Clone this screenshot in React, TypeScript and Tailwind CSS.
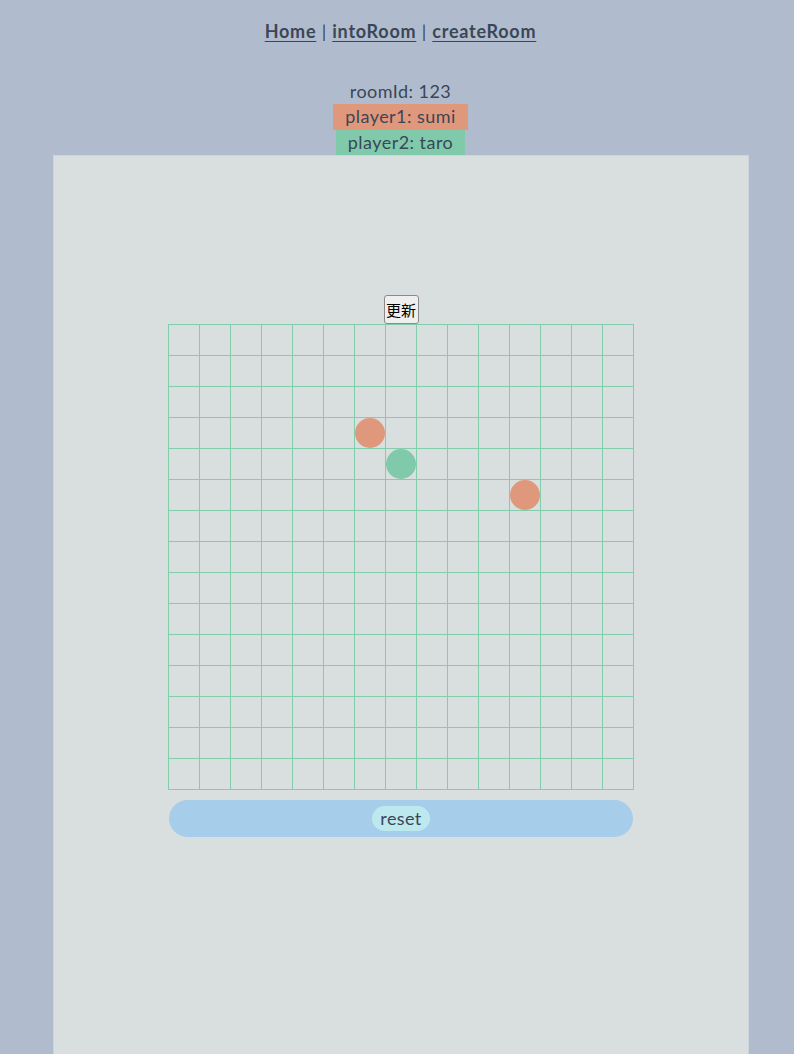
import React from "react";

const stones: Record<string, "o" | "g"> = {
  "3-6": "o",
  "4-7": "g",
  "5-11": "o",
};

export default function App() {
  const cells = [];
  for (let r = 0; r < 15; r++) {
    for (let c = 0; c < 15; c++) {
      const s = stones[`${r}-${c}`];
      cells.push(
        <div
          key={`${r}-${c}`}
          className="w-[31px] h-[31px] border-r border-b border-[#82cdab]"
        >
          {s === "o" && <div className="w-[30px] h-[30px] rounded-full bg-[#e0987c]" />}
          {s === "g" && <div className="w-[30px] h-[30px] rounded-full bg-[#80caab]" />}
        </div>
      );
    }
  }

  return (
    <div
      className="min-h-[1054px] bg-[#b0bccd] text-[#3b4657] overflow-hidden"
      style={{ fontFamily: "Lato, 'Noto Sans', sans-serif" }}
    >
      <nav className="pl-[7px] pt-[18px] text-center text-[18px] leading-[26px] font-bold tracking-[0.75px]">
        <a className="underline underline-offset-[3px]">Home</a>
        <span className="font-normal"> | </span>
        <a className="underline underline-offset-[3px]">intoRoom</a>
        <span className="font-normal"> | </span>
        <a className="underline underline-offset-[3px]">createRoom</a>
      </nav>
      <div className="pl-[7px] mt-[34.5px] flex flex-col items-center text-[18px] leading-[25.5px] tracking-[0.45px]">
        <div>roomId: 123</div>
        <div className="bg-[#e0987c] px-3">player1: sumi</div>
        <div className="bg-[#80caab] px-3">player2: taro</div>
      </div>
      <div className="ml-[53px] w-[696px] h-[920px] bg-[#d9dfdf] border border-[#cdd4dc] flex flex-col items-center">
        <button
          className="mt-[139px] w-[35px] h-[29px] border border-[#8a8a8a] rounded-[3px] bg-[#efefef] text-black text-[15px] leading-[27px] p-0"
          style={{ fontFamily: "'Noto Sans CJK JP', sans-serif" }}
        >
          更新
        </button>
        <div className="grid grid-cols-[repeat(15,31px)] border-l border-t border-[#82cdab]">
          {cells}
        </div>
        <div className="mt-[10px] w-[464px] h-[37px] rounded-full bg-[#a6cdea] flex items-center justify-center">
          <div className="h-[25px] px-[8px] rounded-full bg-[#bde9ee] text-[18px] leading-[25px] tracking-[0.4px]">
            reset
          </div>
        </div>
      </div>
    </div>
  );
}
